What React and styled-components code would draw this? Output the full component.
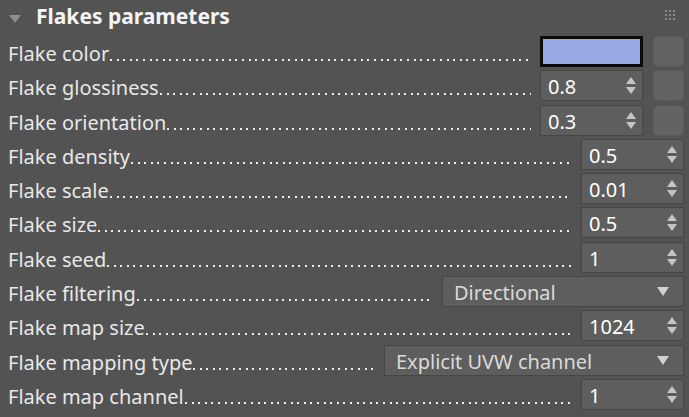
import React from 'react';
import styled, { createGlobalStyle } from 'styled-components';

const GlobalStyle = createGlobalStyle`
  html, body {
    margin: 0;
    padding: 0;
    background: #535353;
  }
  body {
    font-family: 'Noto Sans', 'Open Sans', sans-serif;
    color: #e6e6e6;
  }
`;

const Panel = styled.div`
  width: 689px;
  height: 417px;
  box-sizing: border-box;
  padding: 0 5px 0 8px;
  background: #535353;
  overflow: hidden;
`;

const Header = styled.div`
  display: flex;
  align-items: center;
  height: 36px;
`;

const Caret = styled.div`
  width: 0;
  height: 0;
  border-left: 6px solid transparent;
  border-right: 6px solid transparent;
  border-top: 8px solid #8e8e8e;
  margin: 1px 15px 0 1px;
`;

const Title = styled.h2`
  flex: 1;
  margin: 0;
  font-size: 21px;
  font-weight: 700;
  color: #f4f4f4;
  line-height: 1;
  padding-bottom: 3px;
`;

const Grip = styled.div`
  display: grid;
  grid-template-columns: repeat(3, 2px);
  grid-auto-rows: 2px;
  gap: 2px;
  margin: 0 9px 6px 0;
  span {
    background: #8a8a8a;
  }
`;

const Rows = styled.div`
  display: flex;
  flex-direction: column;
  gap: 3.3px;
`;

const Row = styled.div`
  display: flex;
  align-items: center;
  height: 31px;
`;

const Label = styled.div`
  flex: 1;
  min-width: 0;
  height: 31px;
  display: flex;
  white-space: nowrap;
  font-size: 20px;
  line-height: 31px;
  color: #e8e8e8;
  margin-right: 9px;
  span {
    padding-top: 2px;
  }
`;

const Leader = styled.div`
  flex: 1;
  min-width: 0;
  height: 31px;
  background-image: repeating-linear-gradient(
    to right,
    #ececec 0 2px,
    transparent 2px 6.6px
  );
  background-size: 100% 2px;
  background-repeat: no-repeat;
  background-position: 1px 23px;
`;

const Field = styled.div`
  box-sizing: border-box;
  width: ${(p) => p.$w}px;
  height: 31px;
  display: flex;
  align-items: center;
  background: #5e5e5e;
  border: 1px solid #464646;
  font-size: 20px;
  color: ${(p) => (p.$dim ? '#dadada' : '#ffffff')};
  padding: 0 ${(p) => (p.$dim ? 14 : 6)}px 0 ${(p) => (p.$dim ? 11 : 7)}px;
`;

const Value = styled.span`
  flex: 1;
  line-height: 1;
  padding-top: 3px;
`;

const Swatch = styled.div`
  box-sizing: border-box;
  width: 103px;
  height: 31px;
  background: #97a9e3;
  border: 3px solid #0c0c0c;
`;

const SideButton = styled.div`
  box-sizing: border-box;
  width: 31px;
  height: 31px;
  margin-left: 10px;
  background: #636363;
  border: 1px solid #5a5a5a;
  border-radius: 5px;
`;

const Arrows = styled.div`
  display: flex;
  flex-direction: column;
  gap: 3px;
`;

const Tri = styled.div`
  width: 0;
  height: 0;
  border-left: 5.5px solid transparent;
  border-right: 5.5px solid transparent;
  ${(p) => (p.$up ? 'border-bottom' : 'border-top')}: 7px solid #c4c4c4;
`;

const DropArrow = styled.div`
  width: 0;
  height: 0;
  border-left: 6px solid transparent;
  border-right: 6px solid transparent;
  border-top: 9px solid #d2d2d2;
`;

const Spinner = ({ value }) => (
  <Field $w={103}>
    <Value>{value}</Value>
    <Arrows>
      <Tri $up />
      <Tri />
    </Arrows>
  </Field>
);

const Dropdown = ({ value, width }) => (
  <Field $w={width} $dim>
    <Value>{value}</Value>
    <DropArrow />
  </Field>
);

const rows = [
  { label: 'Flake color', kind: 'color', side: true },
  { label: 'Flake glossiness', kind: 'spin', value: '0.8', side: true },
  { label: 'Flake orientation', kind: 'spin', value: '0.3', side: true },
  { label: 'Flake density', kind: 'spin', value: '0.5' },
  { label: 'Flake scale', kind: 'spin', value: '0.01' },
  { label: 'Flake size', kind: 'spin', value: '0.5' },
  { label: 'Flake seed', kind: 'spin', value: '1' },
  { label: 'Flake filtering', kind: 'drop', value: 'Directional', width: 242 },
  { label: 'Flake map size', kind: 'spin', value: '1024' },
  { label: 'Flake mapping type', kind: 'drop', value: 'Explicit UVW channel', width: 300 },
  { label: 'Flake map channel', kind: 'spin', value: '1' },
];

export default function App() {
  return (
    <>
      <GlobalStyle />
      <Panel>
        <Header>
          <Caret />
          <Title>Flakes parameters</Title>
          <Grip>
            {Array.from({ length: 9 }).map((_, i) => (
              <span key={i} />
            ))}
          </Grip>
        </Header>
        <Rows>
          {rows.map((r) => (
            <Row key={r.label}>
              <Label>
                <span>{r.label}</span>
                <Leader />
              </Label>
              {r.kind === 'color' && <Swatch />}
              {r.kind === 'spin' && <Spinner value={r.value} />}
              {r.kind === 'drop' && <Dropdown value={r.value} width={r.width} />}
              {r.side && <SideButton />}
            </Row>
          ))}
        </Rows>
      </Panel>
    </>
  );
}
